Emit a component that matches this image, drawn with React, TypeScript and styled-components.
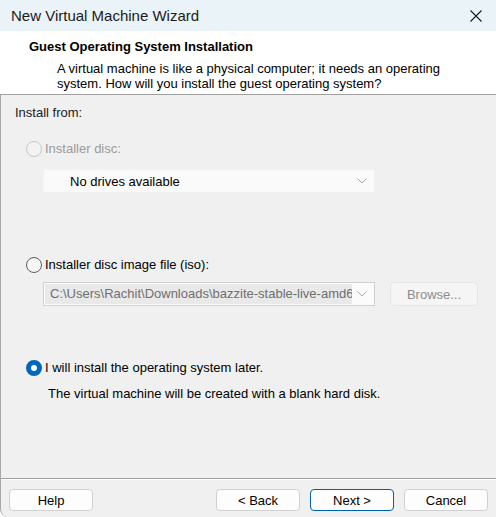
import React from "react";
import styled, { createGlobalStyle, css } from "styled-components";

const GlobalStyle = createGlobalStyle`
    html, body {
        margin: 0;
        padding: 0;
        background: #ffffff;
    }
    body {
        font-family: "Liberation Sans", Arial, sans-serif;
        font-size: 13px;
        color: #1a1a1a;
    }
`;

const Window = styled.div`
    width: 496px;
    height: 517px;
    display: flex;
    flex-direction: column;
    overflow: hidden;
    background: #ffffff;
`;

const TitleBar = styled.div`
    height: 31px;
    display: flex;
    align-items: center;
    justify-content: space-between;
    background: #eaf4f8;
    padding-left: 11px;
    font-size: 15px;
    color: #1b1b1b;
`;

const CloseBox = styled.div`
    width: 40px;
    height: 31px;
    display: flex;
    align-items: center;
    justify-content: center;
`;

const Header = styled.header`
    height: 64px;
    box-sizing: border-box;
    background: #ffffff;
    border-bottom: 1px solid #a0a0a0;
    padding: 8px 0 0 29px;
`;

const HeaderTitle = styled.div`
    font-weight: bold;
    line-height: 16px;
    color: #000;
`;

const HeaderText = styled.p`
    margin: 6px 0 0 28px;
    line-height: 15px;
    color: #000;
`;

const Body = styled.div`
    flex: 1;
    display: flex;
    flex-direction: column;
    background: #f0f0f0;
    border-left: 1px solid #a8a8a8;
    border-bottom-left-radius: 8px;
`;

const Content = styled.section`
    flex: 1;
    padding: 10px 0 0 14px;
    display: flex;
    flex-direction: column;
    align-items: flex-start;
`;

const Label = styled.div`
    line-height: 16px;
`;

const RadioRow = styled.label<{ $top: number; $disabled?: boolean }>`
    display: flex;
    align-items: center;
    gap: 3px;
    margin: ${(p) => p.$top}px 0 0 11px;
    line-height: 16px;
    color: ${(p) => (p.$disabled ? "#9b9b9b" : "#000")};
`;

const RadioDot = styled.span<{ $checked?: boolean; $disabled?: boolean }>`
    width: 16px;
    height: 16px;
    box-sizing: border-box;
    border-radius: 50%;
    display: inline-block;
    flex-shrink: 0;
    border: 1px solid ${(p) => (p.$disabled ? "#c6c6c6" : "#5c5c5c")};
    background: ${(p) => (p.$disabled ? "#f3f3f3" : "#f7f7f7")};
    ${(p) =>
        p.$checked &&
        css`
            border: 5px solid #0067c0;
            background: #ffffff;
        `}
`;

const Combo = styled.div<{ $framed?: boolean }>`
    width: 332px;
    height: 24px;
    box-sizing: border-box;
    display: flex;
    align-items: center;
    background: ${(p) => (p.$framed ? "#fbfbfb" : "#fafafa")};
    border: 1px solid ${(p) => (p.$framed ? "#d1d1d1" : "#f2f2f2")};
    position: relative;
`;

const DriveCombo = styled(Combo)`
    margin: 12px 0 0 28px;
`;

const ComboText = styled.span<{ $muted?: boolean }>`
    flex: 1;
    white-space: nowrap;
    overflow: hidden;
    ${(p) =>
        p.$muted
            ? css`
                  margin: 0 22px 0 1px;
                  padding-left: 5px;
                  height: 20px;
                  line-height: 20px;
                  background: #e9e9e9;
                  color: #6f6f6f;
              `
            : css`
                  padding-left: 26px;
                  color: #000;
              `}
`;

const Chevron = styled.svg`
    position: absolute;
    right: 7px;
    top: 50%;
    margin-top: -3px;
`;

const IsoRow = styled.div`
    display: flex;
    align-items: center;
    gap: 15px;
    margin: 9px 0 0 28px;
`;

const Button = styled.button<{ $primary?: boolean; $disabled?: boolean }>`
    width: 84px;
    height: 22px;
    box-sizing: border-box;
    padding: 0;
    border-radius: 4px;
    font-family: inherit;
    font-size: 13px;
    background: ${(p) => (p.$disabled ? "#f5f5f5" : "#fdfdfd")};
    color: ${(p) => (p.$disabled ? "#8c8c8c" : "#000")};
    border: 1px solid ${(p) => (p.$primary ? "#005fb8" : p.$disabled ? "#e6e6e6" : "#d0d0d0")};
`;

const BrowseButton = styled(Button)`
    width: 88px;
    height: 24px;
`;

const Note = styled.div`
    margin: 10px 0 0 33px;
    line-height: 16px;
    color: #000;
`;

const Footer = styled.footer`
    height: 39px;
    box-sizing: border-box;
    border-top: 1px solid #a0a0a0;
    box-shadow: inset 0 1px 0 #ffffff;
    padding: 10px 8px 0 8px;
    display: flex;
    justify-content: space-between;
`;

const ButtonGroup = styled.div`
    display: flex;
    gap: 10px;
`;

const ChevronDown = () => (
    <Chevron width="10" height="6" viewBox="0 0 10 6">
        <polyline points="0.5,0.5 5,5 9.5,0.5" fill="none" stroke="#a8a8a8" strokeWidth="1" />
    </Chevron>
);

export default function App() {
    return (
        <Window>
            <GlobalStyle />
            <TitleBar>
                <span>New Virtual Machine Wizard</span>
                <CloseBox>
                    <svg width="12" height="12" viewBox="0 0 12 12">
                        <path d="M0.5 0.5 L11.5 11.5 M11.5 0.5 L0.5 11.5" stroke="#1a1a1a" strokeWidth="1.1" />
                    </svg>
                </CloseBox>
            </TitleBar>
            <Header>
                <HeaderTitle>Guest Operating System Installation</HeaderTitle>
                <HeaderText>
                    A virtual machine is like a physical computer; it needs an operating
                    <br />
                    system. How will you install the guest operating system?
                </HeaderText>
            </Header>
            <Body>
                <Content>
                    <Label>Install from:</Label>
                    <RadioRow $top={20} $disabled>
                        <RadioDot $disabled />
                        Installer disc:
                    </RadioRow>
                    <DriveCombo>
                        <ComboText>No drives available</ComboText>
                        <ChevronDown />
                    </DriveCombo>
                    <RadioRow $top={64}>
                        <RadioDot />
                        Installer disc image file (iso):
                    </RadioRow>
                    <IsoRow>
                        <Combo $framed>
                            <ComboText $muted>C:\Users\Rachit\Downloads\bazzite-stable-live-amd64.iso</ComboText>
                            <ChevronDown />
                        </Combo>
                        <BrowseButton $disabled>Browse...</BrowseButton>
                    </IsoRow>
                    <RadioRow $top={54}>
                        <RadioDot $checked />
                        I will install the operating system later.
                    </RadioRow>
                    <Note>The virtual machine will be created with a blank hard disk.</Note>
                </Content>
                <Footer>
                    <Button>Help</Button>
                    <ButtonGroup>
                        <Button>&lt; Back</Button>
                        <Button $primary>Next &gt;</Button>
                        <Button>Cancel</Button>
                    </ButtonGroup>
                </Footer>
            </Body>
        </Window>
    );
}
